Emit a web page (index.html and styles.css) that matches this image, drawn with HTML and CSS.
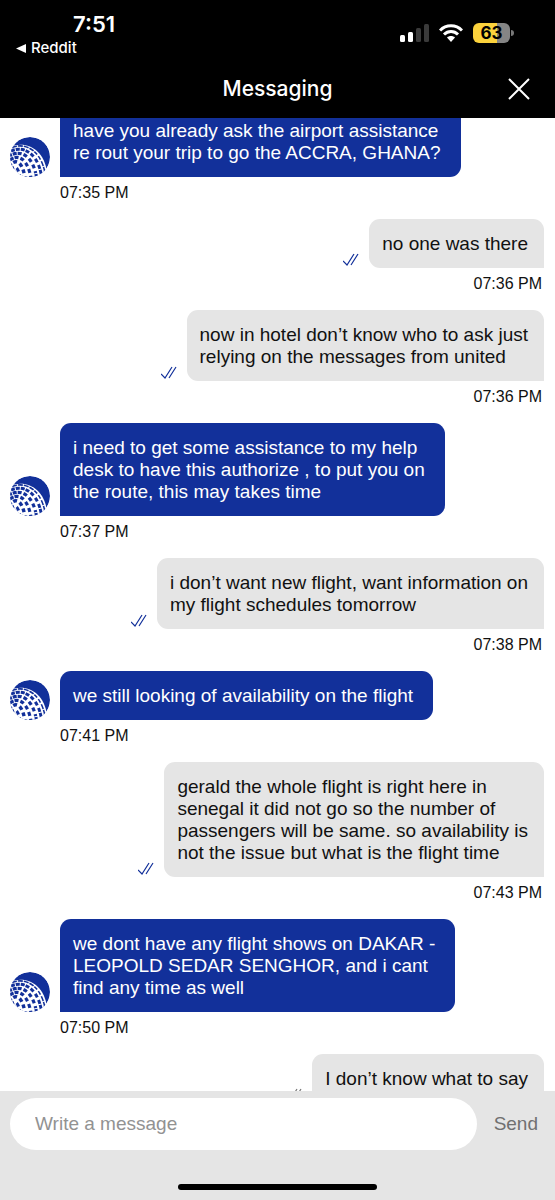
FILE: index.html
```html
<!DOCTYPE html>
<html lang="en">
<head>
<meta charset="utf-8">
<meta name="viewport" content="width=device-width, initial-scale=1">
<title>Messaging</title>
<link rel="stylesheet" href="styles.css">
</head>
<body>
<svg class="defs" aria-hidden="true">
  <symbol id="globe" viewBox="0 0 40 40">
    <clipPath id="disc"><circle cx="20" cy="20" r="20"/></clipPath>
    <g clip-path="url(#disc)">
      <circle cx="20" cy="20" r="20" fill="#12309a"/>
      <path d="M0 10C16 3 34 12 37 35L36 40H0Z" fill="#fff"/>
      <g fill="none" stroke="#12309a">
        <path d="M2 10.500C16 5 31 14 35 36" stroke-width="1.6" stroke-dasharray="5 1 5 1 5 1 5 1 4 2 4 2"/>
        <path d="M1 14C14 8 28 17 31.500 39" stroke-width="3" stroke-dasharray="4 1 4 1 4 1 4 2 4 3 4 3"/>
        <path d="M0 18.500C12 12 23 20 26.500 40" stroke-width="3.2" stroke-dasharray="2 1 4 1 4 2 4 3 4 3 4 3"/>
        <path d="M0 23C10 16 18 24 21 41" stroke-width="3.2" stroke-dasharray="4 1 4 2 4 3 4 3 4 3"/>
        <path d="M0 28C8 20 13 28 15 41" stroke-width="3.4" stroke-dasharray="2 2 4 3 4 3 4 3"/>
        <path d="M1 33C6 26 9 33 10 41" stroke-width="3" stroke-dasharray="4 3"/>
      </g>
    </g>
  </symbol>
  <symbol id="ticks" viewBox="0 0 16 13">
    <path d="M0 8L4 12L11 1M8 12L15 1" fill="none" stroke="currentColor" stroke-width="1.2"/>
  </symbol>
</svg>
<div class="app">
  <header class="top">
    <div class="status">
      <div class="status-left">
        <span class="clock">7:51</span>
        <a class="back" href="#"><svg width="10" height="9" viewBox="0 0 10 9" aria-hidden="true"><path d="M0 4.500L10 0V9Z" fill="#fff"/></svg>Reddit</a>
      </div>
      <div class="status-right">
        <svg width="29" height="18" viewBox="0 0 29 18" aria-hidden="true"><g fill="#fff"><rect y="11" width="5" height="7" rx="1.500"/><rect x="8" y="8" width="5" height="10" rx="1.500"/></g><g fill="#3a3a3a"><rect x="16" y="4" width="5" height="14" rx="1.500"/><rect x="24" width="5" height="18" rx="1.500"/></g></svg>
        <svg width="24" height="18" viewBox="0 0 24 18" aria-hidden="true"><g fill="none" stroke="#fff" stroke-width="3"><path d="M1 6.500C7 .2 17 .2 23 6.500"/><path d="M5 10.500C9 6.500 15 6.500 19 10.500"/></g><path d="M8 13.500C10 11.500 14 11.500 16 13.500L12 18Z" fill="#fff"/></svg>
        <span class="battery"><span class="level">63</span></span>
      </div>
    </div>
    <div class="title-bar">
      <h1>Messaging</h1>
      <button class="close" aria-label="Close"><svg width="22" height="22" viewBox="0 0 22 22" aria-hidden="true"><path d="M1 1L21 21M21 1L1 21" stroke="#fff" stroke-width="2"/></svg></button>
    </div>
  </header>

  <main class="chat">
    <div class="thread">
      <article class="msg agent">
        <div class="row"><svg class="avatar" role="img" aria-label="United"><use href="#globe"/></svg><p class="bubble">have you already ask the airport assistance<br>re rout your trip to go the ACCRA, GHANA?</p></div>
        <time>07:35 PM</time>
      </article>
      <article class="msg user">
        <div class="row"><svg class="ticks" aria-hidden="true"><use href="#ticks"/></svg><p class="bubble">no one was there</p></div>
        <time>07:36 PM</time>
      </article>
      <article class="msg user">
        <div class="row"><svg class="ticks" aria-hidden="true"><use href="#ticks"/></svg><p class="bubble">now in hotel don’t know who to ask just<br>relying on the messages from united</p></div>
        <time>07:36 PM</time>
      </article>
      <article class="msg agent">
        <div class="row"><svg class="avatar" role="img" aria-label="United"><use href="#globe"/></svg><p class="bubble">i need to get some assistance to my help<br>desk to have this authorize , to put you on<br>the route, this may takes time</p></div>
        <time>07:37 PM</time>
      </article>
      <article class="msg user">
        <div class="row"><svg class="ticks" aria-hidden="true"><use href="#ticks"/></svg><p class="bubble">i don’t want new flight, want information on<br>my flight schedules tomorrow</p></div>
        <time>07:38 PM</time>
      </article>
      <article class="msg agent">
        <div class="row"><svg class="avatar" role="img" aria-label="United"><use href="#globe"/></svg><p class="bubble">we still looking of availability on the flight</p></div>
        <time>07:41 PM</time>
      </article>
      <article class="msg user">
        <div class="row"><svg class="ticks" aria-hidden="true"><use href="#ticks"/></svg><p class="bubble">gerald the whole flight is right here in<br>senegal it did not go so the number of<br>passengers will be same. so availability is<br>not the issue but what is the flight time</p></div>
        <time>07:43 PM</time>
      </article>
      <article class="msg agent">
        <div class="row"><svg class="avatar" role="img" aria-label="United"><use href="#globe"/></svg><p class="bubble">we dont have any flight shows on DAKAR -<br>LEOPOLD SEDAR SENGHOR, and i cant<br>find any time as well</p></div>
        <time>07:50 PM</time>
      </article>
      <article class="msg user pending">
        <div class="row"><svg class="ticks" aria-hidden="true"><use href="#ticks"/></svg><p class="bubble">I don’t know what to say</p></div>
      </article>
    </div>
  </main>

  <footer class="composer">
    <form class="form">
      <input class="field" type="text" placeholder="Write a message" aria-label="Write a message">
      <button class="send" type="button">Send</button>
    </form>
    <div class="home"></div>
  </footer>
</div>
</body>
</html>
```
FILE: styles.css
```css
* { box-sizing: border-box; }
body {
  margin: 0;
  background: #fff;
  color: #111;
  font-family: "Liberation Sans", Arial, sans-serif;
}
.defs { position: absolute; width: 0; height: 0; }
.app { display: flex; flex-direction: column; height: 100vh; overflow: hidden; }

.top {
  position: relative;
  z-index: 1;
  background: #000;
  color: #fff;
  font-family: Inter, sans-serif;
}
.status { display: flex; justify-content: space-between; padding: 10px 45px 0 16px; }
.status-left { display: flex; flex-direction: column; }
.clock { padding-left: 57px; font-size: 22px; line-height: 28px; font-weight: 600; }
.back {
  display: flex;
  align-items: center;
  gap: 5px;
  color: #fff;
  font-size: 15px;
  line-height: 20px;
  font-weight: 500;
  text-decoration: none;
}
.status-right { display: flex; align-items: center; gap: 10px; height: 20px; margin-top: 13px; }
.battery {
  position: relative;
  width: 37px;
  height: 20px;
  border-radius: 6px;
  background: linear-gradient(90deg, #fbd23c 65%, #858585 65%);
  color: #000;
  text-align: center;
}
.battery::after {
  content: "";
  position: absolute;
  left: 38px;
  top: 7px;
  width: 3px;
  height: 6px;
  border-radius: 0 3px 3px 0;
  background: #777;
}
.level { display: block; font-size: 17px; line-height: 20px; font-weight: 700; }
.title-bar {
  display: grid;
  grid-template-columns: 1fr auto 1fr;
  align-items: center;
  height: 60px;
  padding: 2px 25px 0;
}
.title-bar h1 {
  grid-column: 2;
  margin: 0;
  font-size: 21px;
  line-height: 28px;
  font-weight: 500;
}
.close { justify-self: end; display: flex; padding: 0; border: 0; background: none; }

.chat {
  display: flex;
  flex: 1;
  flex-direction: column;
  justify-content: flex-end;
  min-height: 0;
  overflow: hidden;
}
.thread { margin-bottom: -12px; padding: 0 11px 0 10px; }
.msg { display: flex; flex-direction: column; }
.row { display: flex; align-items: flex-end; gap: 10px; }
.bubble {
  margin: 0;
  padding: 14px 16px 13px 13px;
  border-radius: 11px;
  font-size: 19px;
  line-height: 22px;
}
.msg time { padding: 6px 0 16px; font-size: 16px; line-height: 20px; }
.agent { align-items: flex-start; }
.agent .bubble { padding-right: 20px; background: #12309a; color: #fff; border-bottom-left-radius: 0; }
.agent time { padding-left: 50px; }
.user { align-items: flex-end; }
.user .bubble { background: #e5e5e5; border-bottom-right-radius: 0; }
.user time { padding-right: 2px; }
.avatar { width: 40px; height: 40px; }
.ticks { width: 16px; height: 13px; margin-bottom: 2px; color: #12309a; }
.pending .ticks { color: #777; }

.composer { background: #e5e5e5; padding: 7px 0 10px; }
.form { display: flex; align-items: center; gap: 17px; margin: 0; padding: 0 17px 0 10px; }
.field {
  flex: 1;
  min-width: 0;
  height: 52px;
  padding: 0 25px;
  border: 0;
  border-radius: 26px;
  background: #fff;
  font: 19px "Liberation Sans", Arial, sans-serif;
}
.field::placeholder { color: #929292; opacity: 1; }
.send { padding: 0; border: 0; background: none; color: #707070; font: 19px "Liberation Sans", Arial, sans-serif; }
.home { width: 36%; height: 6px; margin: 34px auto 0; border-radius: 3px; background: #000; }
```
